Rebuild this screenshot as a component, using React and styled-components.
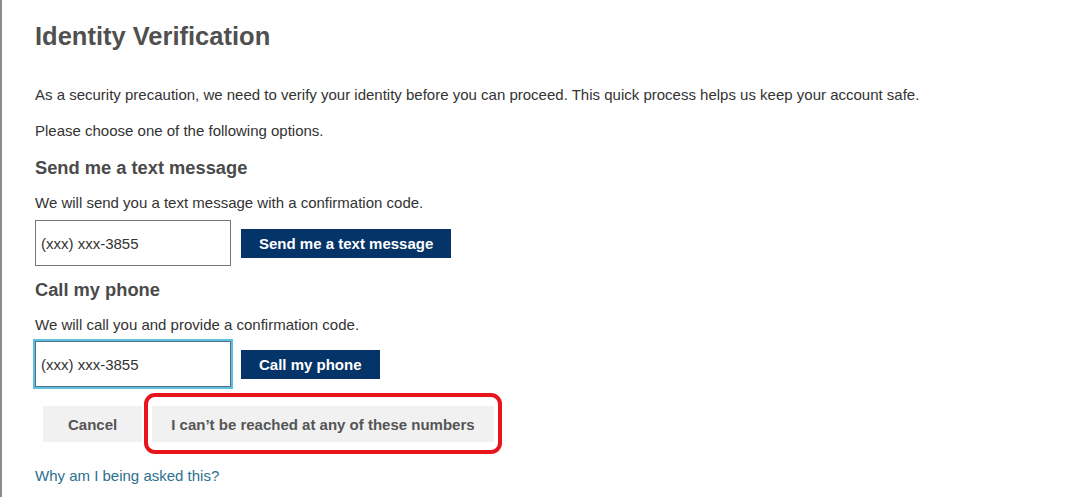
import styled, { createGlobalStyle } from "styled-components";

const GlobalStyle = createGlobalStyle`
  html, body {
    margin: 0;
    padding: 0;
    background: #ffffff;
  }
  body {
    font-family: "Liberation Sans", Arial, sans-serif;
  }
`;

const Page = styled.div`
  min-height: 497px;
  box-sizing: border-box;
  border-left: 2px solid #8c8c8c;
  padding: 21px 0 0 33px;
  color: #333333;
`;

const Title = styled.h1`
  margin: 0;
  font-size: 25.5px;
  line-height: 30px;
  font-weight: bold;
  color: #505050;
`;

const Text = styled.p`
  margin: ${(p) => p.$top || 0}px 0 0;
  font-size: 15px;
  line-height: 20px;
  color: #333333;
`;

const Section = styled.h2`
  margin: ${(p) => p.$top}px 0 0;
  font-size: 18.3px;
  line-height: 22px;
  font-weight: bold;
  color: #4a4a4a;
`;

const OptionRow = styled.div`
  display: flex;
  align-items: center;
  gap: 10px;
  margin-top: ${(p) => p.$top}px;
`;

const PhoneBox = styled.div`
  box-sizing: border-box;
  width: 196px;
  height: 46px;
  display: flex;
  align-items: center;
  padding-left: 5px;
  font-size: 15px;
  color: #333333;
  border: 1px solid ${(p) => (p.$focused ? "#4d6f8a" : "#777777")};
  box-shadow: ${(p) => (p.$focused ? "0 0 0 2px #5cc0de" : "none")};
`;

const PrimaryButton = styled.button`
  height: 29px;
  padding: 0 18px;
  border: none;
  background: #053468;
  color: #ffffff;
  font-family: inherit;
  font-size: 15px;
  font-weight: bold;
  cursor: pointer;
`;

const Actions = styled.div`
  display: flex;
  align-items: center;
  gap: 10px;
  margin: 19px 0 0 8px;
`;

const GreyButton = styled.button`
  position: relative;
  height: 36px;
  padding: 0 ${(p) => p.$pad}px;
  border: none;
  background: #f1f1f1;
  color: #555555;
  font-family: inherit;
  font-size: 15px;
  font-weight: bold;
  cursor: pointer;

  ${(p) =>
    p.$marked &&
    `
    &::after {
      content: "";
      position: absolute;
      top: -13px;
      bottom: -12px;
      left: -8px;
      right: -8px;
      border: 4px solid #e8141c;
      border-radius: 11px;
      pointer-events: none;
    }
  `}
`;

const HelpLink = styled.a`
  display: inline-block;
  margin-top: 24px;
  font-size: 15px;
  line-height: 20px;
  color: #2d6f8f;
  text-decoration: none;
`;

export default function App() {
  return (
    <>
      <GlobalStyle />
      <Page>
        <Title>Identity Verification</Title>
        <Text $top={34}>
          As a security precaution, we need to verify your identity before you can proceed. This
          quick process helps us keep your account safe.
        </Text>
        <Text $top={16}>Please choose one of the following options.</Text>

        <Section $top={16}>Send me a text message</Section>
        <Text $top={14}>We will send you a text message with a confirmation code.</Text>
        <OptionRow $top={7}>
          <PhoneBox>(xxx) xxx-3855</PhoneBox>
          <PrimaryButton>Send me a text message</PrimaryButton>
        </OptionRow>

        <Section $top={13}>Call my phone</Section>
        <Text $top={14}>We will call you and provide a confirmation code.</Text>
        <OptionRow $top={6}>
          <PhoneBox $focused>(xxx) xxx-3855</PhoneBox>
          <PrimaryButton>Call my phone</PrimaryButton>
        </OptionRow>

        <Actions>
          <GreyButton $pad={25}>Cancel</GreyButton>
          <GreyButton $pad={19} $marked>
            I can’t be reached at any of these numbers
          </GreyButton>
        </Actions>

        <HelpLink href="#">Why am I being asked this?</HelpLink>
      </Page>
    </>
  );
}
